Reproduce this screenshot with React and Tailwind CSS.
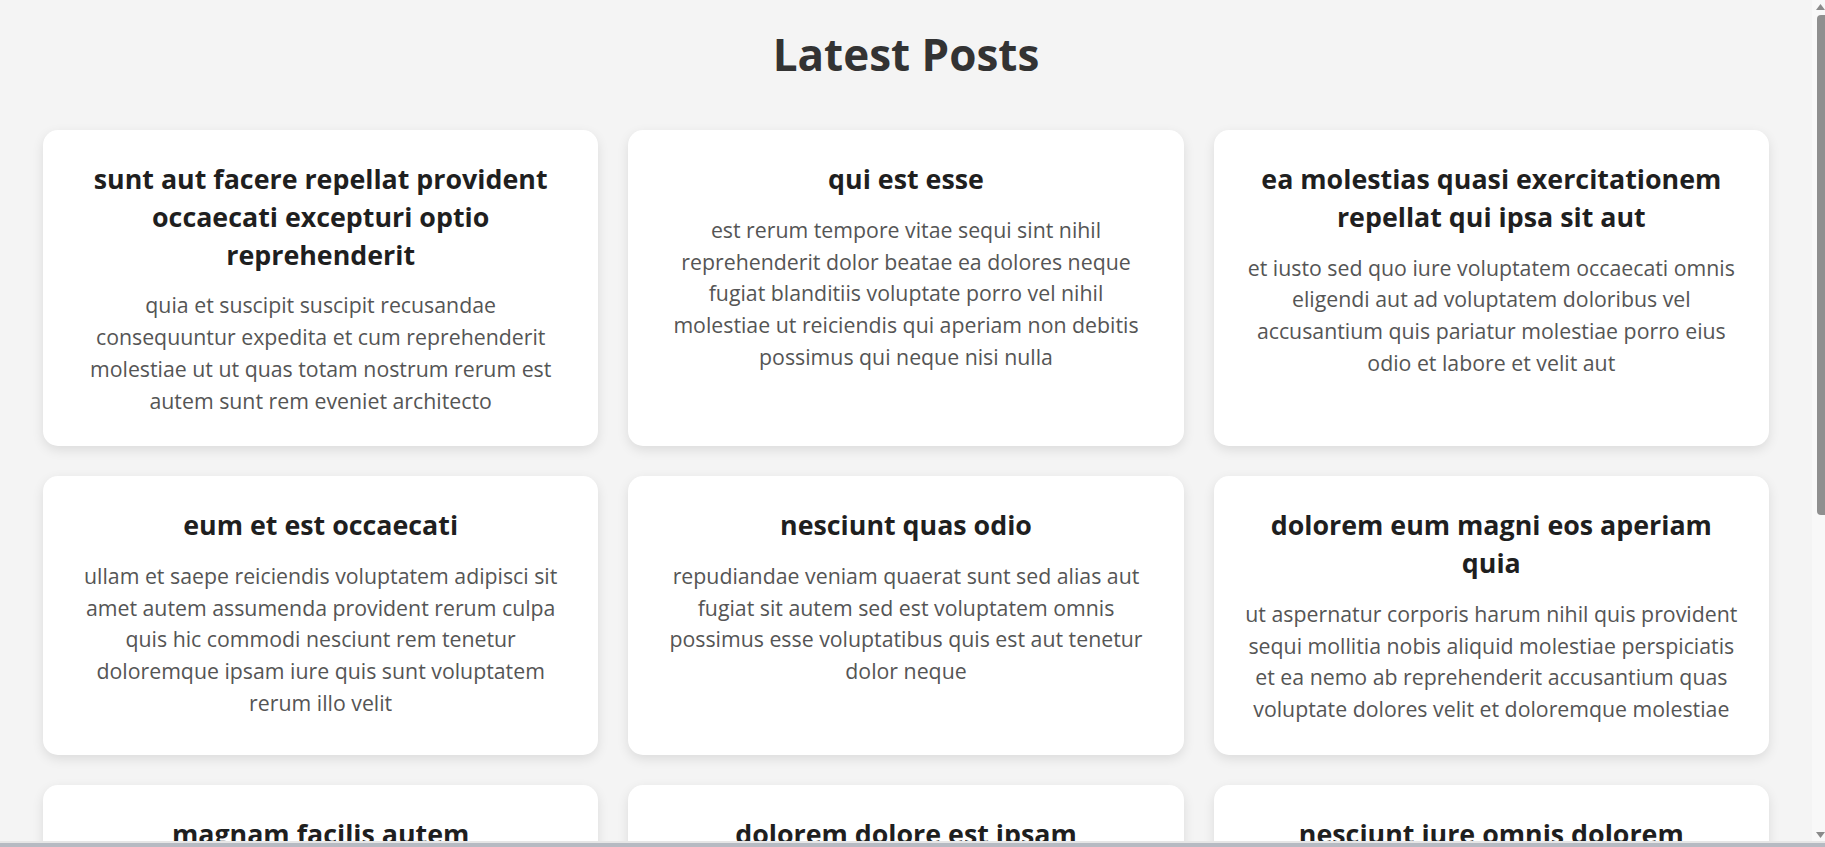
const posts = [
  {
    id: 1,
    title: 'sunt aut facere repellat provident occaecati excepturi optio reprehenderit',
    body: 'quia et suscipit suscipit recusandae consequuntur expedita et cum reprehenderit molestiae ut ut quas totam nostrum rerum est autem sunt rem eveniet architecto',
  },
  {
    id: 2,
    title: 'qui est esse',
    body: 'est rerum tempore vitae sequi sint nihil reprehenderit dolor beatae ea dolores neque fugiat blanditiis voluptate porro vel nihil molestiae ut reiciendis qui aperiam non debitis possimus qui neque nisi nulla',
  },
  {
    id: 3,
    title: 'ea molestias quasi exercitationem repellat qui ipsa sit aut',
    body: 'et iusto sed quo iure voluptatem occaecati omnis eligendi aut ad voluptatem doloribus vel accusantium quis pariatur molestiae porro eius odio et labore et velit aut',
  },
  {
    id: 4,
    title: 'eum et est occaecati',
    body: 'ullam et saepe reiciendis voluptatem adipisci sit amet autem assumenda provident rerum culpa quis hic commodi nesciunt rem tenetur doloremque ipsam iure quis sunt voluptatem rerum illo velit',
  },
  {
    id: 5,
    title: 'nesciunt quas odio',
    body: 'repudiandae veniam quaerat sunt sed alias aut fugiat sit autem sed est voluptatem omnis possimus esse voluptatibus quis est aut tenetur dolor neque',
  },
  {
    id: 6,
    title: 'dolorem eum magni eos aperiam quia',
    body: 'ut aspernatur corporis harum nihil quis provident sequi mollitia nobis aliquid molestiae perspiciatis et ea nemo ab reprehenderit accusantium quas voluptate dolores velit et doloremque molestiae',
  },
  {
    id: 7,
    title: 'magnam facilis autem',
    body: 'dolore placeat quibusdam ea quo vitae magni quis enim qui quis quo nemo aut saepe quidem repellat excepturi ut quia sunt ut sequi eos ea sed quas',
  },
  {
    id: 8,
    title: 'dolorem dolore est ipsam',
    body: 'dignissimos aperiam dolorem qui eum facilis quibusdam animi sint suscipit qui sint possimus cum quaerat magni maiores excepturi ipsam ut commodi dolor voluptatum modi aut vitae',
  },
  {
    id: 9,
    title: 'nesciunt iure omnis dolorem tempora et accusantium',
    body: 'consectetur animi nesciunt iure dolore enim quia ad veniam autem ut quam aut nobis et est aut quod aut provident voluptas autem voluptas',
  },
]

const Scrollbar = () => (
  <div className="w-[13px] shrink-0 bg-[#f8f8f8] flex flex-col items-end">
    <svg width="9" height="6" viewBox="0 0 9 6" className="mt-[4px]">
      <path d="M4.5 0 L9 6 L0 6 Z" fill="#8a8a8a" />
    </svg>
    <div className="w-[8px] h-[500px] mt-[5px] bg-[#8f8f8f] rounded-l-[4px]"></div>
    <div className="flex-1"></div>
    <svg width="9" height="6" viewBox="0 0 9 6" className="mb-[3px]">
      <path d="M0 0 L9 0 L4.5 6 Z" fill="#8a8a8a" />
    </svg>
  </div>
)

const App = () => {
  return (
    <div className="h-screen flex flex-col overflow-hidden bg-[#f4f4f4] font-['Open_Sans',sans-serif]">
      <div className="flex-1 flex min-h-0">

        <main className="flex-1 min-w-0 overflow-hidden pt-[26px] px-[43px]">
          <h1 className="text-[44px] leading-[56px] font-bold text-center text-[#333] mb-12">Latest Posts</h1>

          <div className="grid grid-cols-3 gap-[30px]">
            {posts.map(post => (
              <div key={post.id} className="bg-white rounded-[15px] shadow-[0_4px_12px_rgba(0,0,0,0.1)] p-[30px] text-center">
                <h2 className="text-[26.8px] leading-[37.8px] font-bold text-[#1f1f1f] mb-4">{post.title}</h2>
                <p className="text-[21.3px] leading-[31.7px] text-[#555]">{post.body}</p>
              </div>
            ))}
          </div>
        </main>

        <Scrollbar />
      </div>

      {/* bord bas de la fenêtre */}
      <div className="h-[6px] shrink-0 border-t-2 border-[#e6e6e6] bg-[#b6bac2]"></div>
    </div>
  )
}

export default App
